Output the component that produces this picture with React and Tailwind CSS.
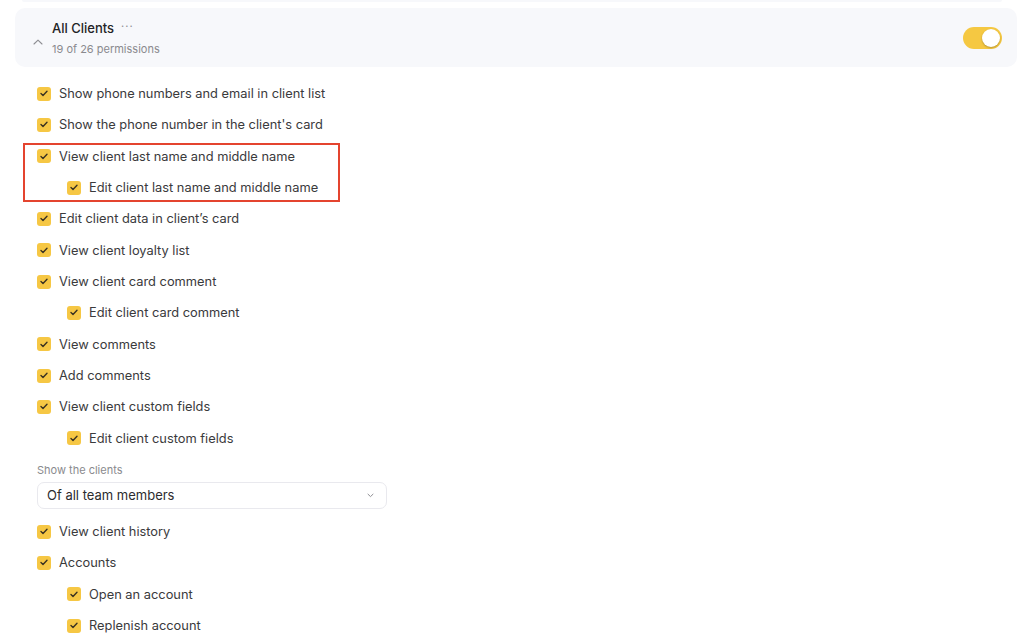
import React from "react";

const Check = () => (
  <span className="flex h-[14px] w-[14px] shrink-0 items-center justify-center rounded-[3px] bg-[#f6c744]">
    <svg width="8" height="7" viewBox="0 0 8 7" fill="none">
      <path d="M1 3.6L3 5.5L7 1.3" stroke="#3a3222" strokeWidth="1.4" strokeLinecap="round" strokeLinejoin="round" />
    </svg>
  </span>
);

const Row = ({ label, nested }) => (
  <div className={`flex h-[31.33px] items-center gap-[8px] ${nested ? "pl-[30px]" : ""}`}>
    <Check />
    <span className="text-[12.85px] text-[#3a3a3c]">{label}</span>
  </div>
);

export default function App() {
  return (
    <div className="min-h-[637px] w-[1024px] bg-white" style={{ fontFamily: "Inter, 'Noto Sans', sans-serif" }}>
      <div className="mx-[22px] h-[2px] rounded-b-[6px] bg-[#f7f8fb]" />
      <div className="ml-[15px] mr-[7px] mt-[6px] flex h-[59px] items-center rounded-[10px] bg-[#f7f8fb] pl-[18px] pr-[15px]">
        <svg width="10" height="6" viewBox="0 0 10 6" fill="none" className="mt-[8px]">
          <path d="M1 5L5 1.2L9 5" stroke="#8e8e93" strokeWidth="1.1" strokeLinecap="round" strokeLinejoin="round" />
        </svg>
        <div className="ml-[9px] flex flex-col">
          <div className="flex items-center gap-[7px]">
            <span className="text-[13px] font-medium text-[#232325]">All Clients</span>
            <span className="mb-[4px] text-[11px] tracking-[1px] text-[#8e8e93]">···</span>
          </div>
          <span className="mt-[2px] text-[11px] text-[#8a8a8e]">19 of 26 permissions</span>
        </div>
        <div className="ml-auto flex h-[22px] w-[39px] items-center justify-end rounded-full bg-[#f5c842] pr-[2px]">
          <span className="h-[18px] w-[18px] rounded-full bg-white shadow-[0_1px_2px_rgba(0,0,0,0.25)]" />
        </div>
      </div>

      <div className="ml-[37px] mt-[11px] flex flex-col">
        <Row label="Show phone numbers and email in client list" />
        <Row label="Show the phone number in the client's card" />
        <div className="relative">
          <Row label="View client last name and middle name" />
          <Row label="Edit client last name and middle name" nested />
          <span className="pointer-events-none absolute left-[-14px] top-[2px] h-[59px] w-[317px] border-2 border-[#e4442f]" />
        </div>
        <Row label="Edit client data in client’s card" />
        <Row label="View client loyalty list" />
        <Row label="View client card comment" />
        <Row label="Edit client card comment" nested />
        <Row label="View comments" />
        <Row label="Add comments" />
        <Row label="View client custom fields" />
        <Row label="Edit client custom fields" nested />

        <span className="mt-[9px] text-[11px] leading-[14px] text-[#8a8a8e]">Show the clients</span>
        <div className="mt-[5px] flex h-[27px] w-[350px] items-center justify-between rounded-[7px] border border-[#e9e9ee] bg-white pl-[9px] pr-[12px]">
          <span className="text-[13px] text-[#2c2c2e]">Of all team members</span>
          <svg width="7" height="5" viewBox="0 0 7 5" fill="none">
            <path d="M1 1.2L3.5 3.6L6 1.2" stroke="#8e8e93" strokeWidth="1" strokeLinecap="round" strokeLinejoin="round" />
          </svg>
        </div>
        <div className="mt-[7px] flex flex-col">
          <Row label="View client history" />
          <Row label="Accounts" />
          <Row label="Open an account" nested />
          <Row label="Replenish account" nested />
        </div>
      </div>
    </div>
  );
}
